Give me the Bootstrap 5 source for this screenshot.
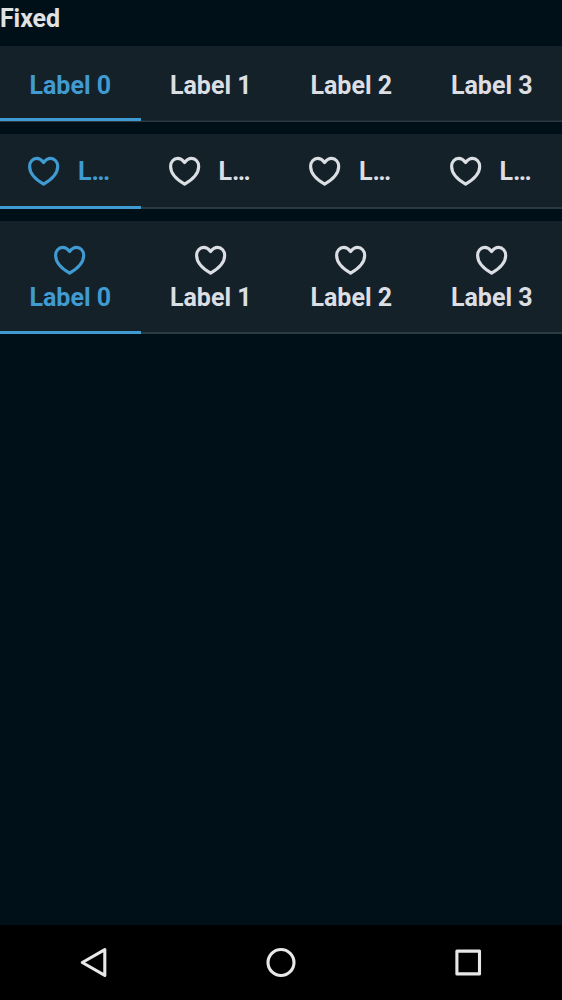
<!DOCTYPE html>
<html lang="en">
<head>
<meta charset="utf-8">
<meta name="viewport" content="width=device-width, initial-scale=1">
<title>Fixed tabs</title>
<link href="https://cdn.jsdelivr.net/npm/bootstrap@5.3.0/dist/css/bootstrap.min.css" rel="stylesheet">
<style>
body { background: #001018; color: #dbdfe4; font-family: Roboto, "Liberation Sans", sans-serif; font-size: 25px; font-weight: 700; line-height: 29px; }
.page-title { font-size: 25px; line-height: 29px; font-weight: 700; height: 46px; padding-top: 4px; letter-spacing: -.1px; color: #e1e2e3; }
.tab-bar { background: #152129; box-shadow: inset 0 -2px #2e3a42; margin-bottom: 12px; }
.tab-bar .nav-link { color: #dbdfe4; padding: 0 28px; height: 75px; border-bottom: 3px solid transparent; border-radius: 0; font-size: inherit; font-weight: 700; min-width: 0; }
.tab-bar .nav-link.active { color: #3f9bd1; border-color: #3f9bd1; }
.tab-bar.text-only { height: 75.5px; box-shadow: inset 0 -1.5px #2e3a42; margin-bottom: 12.5px; }
.tab-bar.text-only .nav-link { padding-top: 6px; }
.tab-bar.inline-icons .nav-link { padding-top: 2px; gap: 18px; }
.tab-bar.stacked .nav-link { height: 113px; padding-top: 5px; }
.heart { width: 32px; height: 30px; flex: none; fill: none; stroke: currentColor; stroke-width: 3.1; stroke-linejoin: round; }
.stacked .heart { margin-bottom: 8px; }
.system-nav { height: 75px; background: #000; }
.system-nav svg { width: 32px; height: 32px; fill: none; stroke: #e8e8e8; stroke-width: 3.1; stroke-linejoin: round; }
</style>
</head>
<body class="vh-100 d-flex flex-column overflow-hidden">
<svg class="d-none"><symbol id="heart" viewBox="0 0 32 30"><path d="M15.6 6.5C13.6 3.8 11.3 2.4 8.7 2.4C4.6 2.4 1.6 5.8 1.6 10.3C1.6 17.3 7.9 23.8 15.6 28.1C23.3 23.8 29.7 17.3 29.7 10.3C29.7 5.8 26.7 2.4 22.6 2.4C19.9 2.4 17.6 3.8 15.6 6.5Z"/></symbol></svg>
<h1 class="page-title m-0">Fixed</h1>
<main class="flex-grow-1">
  <nav class="tab-bar text-only row g-0">
    <a class="nav-link active col-3 d-flex align-items-center justify-content-center text-nowrap">Label 0</a>
    <a class="nav-link col-3 d-flex align-items-center justify-content-center text-nowrap">Label 1</a>
    <a class="nav-link col-3 d-flex align-items-center justify-content-center text-nowrap">Label 2</a>
    <a class="nav-link col-3 d-flex align-items-center justify-content-center text-nowrap">Label 3</a>
  </nav>
  <nav class="tab-bar inline-icons row g-0">
    <a class="nav-link active col-3 d-flex align-items-center"><svg class="heart"><use href="#heart"/></svg><span>L…</span></a>
    <a class="nav-link col-3 d-flex align-items-center"><svg class="heart"><use href="#heart"/></svg><span>L…</span></a>
    <a class="nav-link col-3 d-flex align-items-center"><svg class="heart"><use href="#heart"/></svg><span>L…</span></a>
    <a class="nav-link col-3 d-flex align-items-center"><svg class="heart"><use href="#heart"/></svg><span>L…</span></a>
  </nav>
  <nav class="tab-bar stacked row g-0">
    <a class="nav-link active col-3 d-flex flex-column align-items-center justify-content-center text-nowrap"><svg class="heart"><use href="#heart"/></svg>Label 0</a>
    <a class="nav-link col-3 d-flex flex-column align-items-center justify-content-center text-nowrap"><svg class="heart"><use href="#heart"/></svg>Label 1</a>
    <a class="nav-link col-3 d-flex flex-column align-items-center justify-content-center text-nowrap"><svg class="heart"><use href="#heart"/></svg>Label 2</a>
    <a class="nav-link col-3 d-flex flex-column align-items-center justify-content-center text-nowrap"><svg class="heart"><use href="#heart"/></svg>Label 3</a>
  </nav>
</main>
<footer class="system-nav row g-0 align-items-center justify-content-center text-center">
  <div class="col-4 d-flex justify-content-center"><svg viewBox="0 0 32 32"><path d="M26.8 2.6V28.4L4.3 15.5Z"/></svg></div>
  <div class="col-4 d-flex justify-content-center"><svg viewBox="0 0 32 32"><circle cx="16" cy="15.5" r="13"/></svg></div>
  <div class="col-4 d-flex justify-content-center"><svg viewBox="0 0 32 32"><rect x="4.9" y="4.1" width="22.6" height="22.8"/></svg></div>
</footer>
<script src="https://cdn.jsdelivr.net/npm/bootstrap@5.3.0/dist/js/bootstrap.bundle.min.js"></script>
</body>
</html>
